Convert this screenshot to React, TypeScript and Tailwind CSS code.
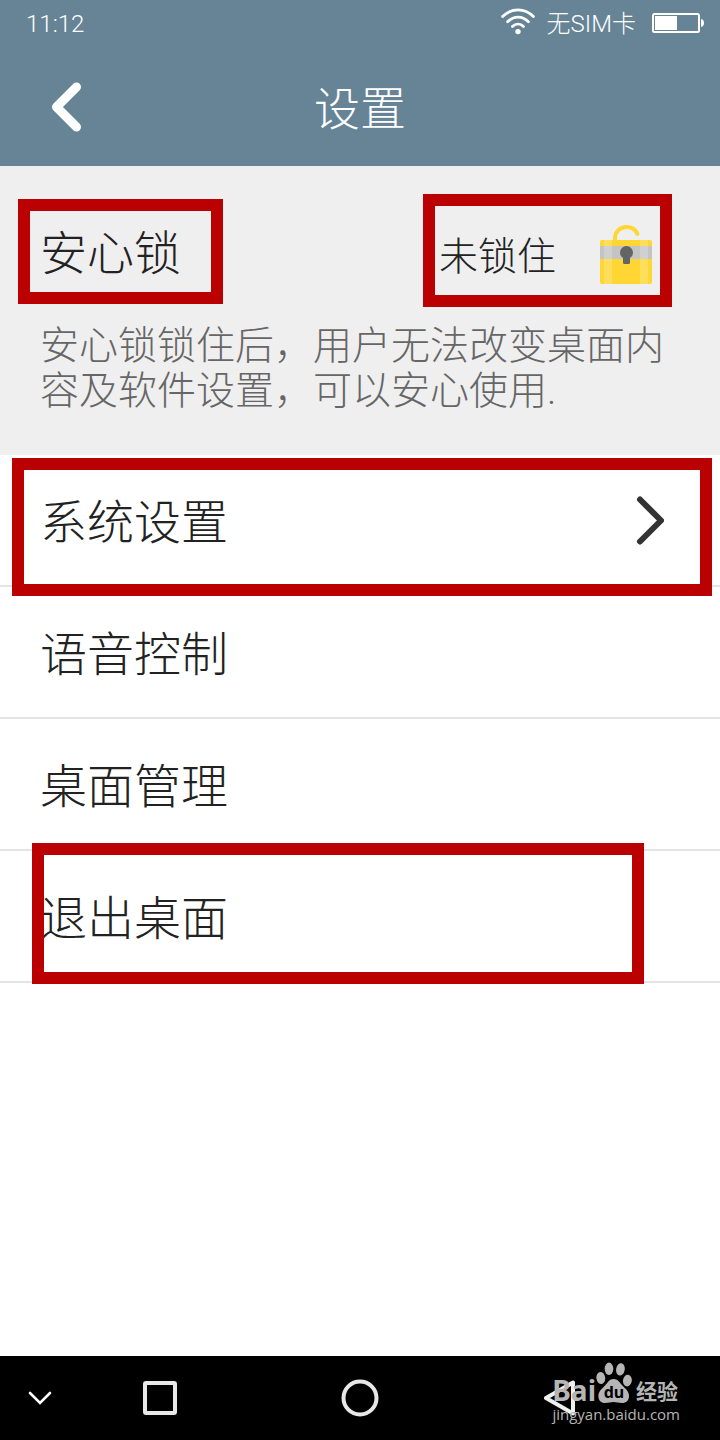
import { ReactNode, useState } from "react";

interface MenuItem {
  id: string;
  label: string;
  arrow?: boolean;
  mark?: string;
}

const menuItems: MenuItem[] = [
  { id: "system", label: "系统设置", arrow: true, mark: "top-[3px] -bottom-[11px] left-3 right-2" },
  { id: "voice", label: "语音控制" },
  { id: "desktop", label: "桌面管理" },
  { id: "exit", label: "退出桌面", mark: "-top-2 -bottom-[3px] left-8 right-19" },
];

// red frame drawn over the part it points out
function Mark({ className }: { className: string }) {
  return (
    <span
      aria-hidden="true"
      className={`pointer-events-none absolute z-10 border-12 border-[#ba0000] ${className}`}
    />
  );
}

function WifiIcon() {
  return (
    <svg width="34" height="32" viewBox="0 0 34 32" fill="none" stroke="white" strokeWidth="2.8" strokeLinecap="round">
      <path d="M1.6 8.6C10.4 -0.4 23.6 -0.4 32.4 8.6" />
      <path d="M6.6 13.8C12.8 7.6 21.2 7.6 27.4 13.8" />
      <path d="M11.4 18.6C14.8 15.2 19.2 15.2 22.6 18.6" />
      <circle cx="17" cy="23.6" r="2.7" fill="white" stroke="none" />
    </svg>
  );
}

function BatteryIcon() {
  return (
    <svg width="52" height="22" viewBox="0 0 52 22" fill="none">
      <rect x="1" y="1" width="46" height="18" rx="1.5" stroke="white" strokeWidth="2" />
      <rect x="3" y="3" width="22" height="14" fill="white" />
      <path d="M49 6C51 6.4 52 7.6 52 10C52 12.4 51 13.6 49 14Z" fill="white" />
    </svg>
  );
}

function LockIcon() {
  return (
    <svg width="52" height="60" viewBox="0 0 52 60" fill="none">
      <path d="M15 17V13.5C15 6.5 20 2 26.5 2C31.5 2 35.5 4.5 37.4 9" stroke="#ffd633" strokeWidth="4" strokeLinecap="round" />
      <rect y="15" width="52" height="44" rx="2" fill="#ffd633" />
      <rect x="4" y="15" width="8" height="44" fill="#ffde5c" />
      <rect x="40" y="15" width="8" height="44" fill="#ffde5c" />
      <rect y="21" width="52" height="13" fill="#c4c4c4" />
      <rect x="4" y="21" width="8" height="13" fill="#d0d0d0" />
      <rect x="40" y="21" width="8" height="13" fill="#d0d0d0" />
      <circle cx="26.5" cy="27.5" r="6.5" fill="#646464" />
      <path d="M23 31H30V37.5Q30 39 28.5 39H24.5Q23 39 23 37.5Z" fill="#646464" />
    </svg>
  );
}

function PawIcon() {
  return (
    <svg width="36" height="42" viewBox="0 0 36 42" fill="#b5b5b5">
      <ellipse cx="4.8" cy="16" rx="4.4" ry="6" transform="rotate(-8 4.8 16)" />
      <ellipse cx="13" cy="6.8" rx="4.3" ry="6.2" />
      <ellipse cx="24.4" cy="7.4" rx="4.3" ry="6.2" transform="rotate(10 24.4 7.4)" />
      <ellipse cx="31.4" cy="18.6" rx="4.4" ry="5.8" transform="rotate(8 31.4 18.6)" />
      <path d="M17.6 17C22 17 23.6 20.6 26.6 23.8C30 27.4 33 29.4 33 34C33 38.4 30.2 41 26 41C22.6 41 20.6 40 17.6 40C14.6 40 12.6 41 9.2 41C5 41 2.4 38.4 2.4 34C2.4 29.4 5.4 27.4 8.8 23.8C11.8 20.6 13.2 17 17.6 17Z" />
    </svg>
  );
}

function NavButton({ label, children }: { label: string; children: ReactNode }) {
  return (
    <button type="button" aria-label={label} className="flex items-center justify-center">
      {children}
    </button>
  );
}

export default function App() {
  const [locked, setLocked] = useState<boolean>(false);

  return (
    <div className="flex min-h-screen flex-col bg-white font-['Roboto','Noto_Sans_CJK_SC',sans-serif] font-light text-[#222222]">
      <header className="bg-[#668496] text-white">
        <div className="flex h-12 items-center justify-between pr-4 pl-[26px] text-2xl">
          <span>11:12</span>
          <div className="flex items-center">
            <WifiIcon />
            <span className="mr-4 ml-3">无SIM卡</span>
            <BatteryIcon />
          </div>
        </div>
        <div className="grid h-[118px] grid-cols-[1fr_auto_1fr] items-center">
          <button type="button" aria-label="返回" className="ml-[52px] w-8">
            <svg width="30" height="50" viewBox="0 0 30 50" fill="none" stroke="white" strokeWidth="9" strokeLinecap="round" strokeLinejoin="round">
              <path d="M24.5 5L4.5 25L24.5 45" />
            </svg>
          </button>
          <h1 className="pt-1 text-[46px] leading-none">设置</h1>
        </div>
      </header>

      <main className="flex-1">
        <section className="bg-[#efefef] px-10 pt-7 pb-[41px]">
          <div className="flex h-30 items-center justify-between">
            <h2 className="relative text-[47px] leading-[60px]">
              安心锁
              <Mark className="-top-[25px] -right-[42px] -left-[22px] -bottom-5" />
            </h2>
            <button
              type="button"
              aria-pressed={locked}
              onClick={() => setLocked(!locked)}
              className="relative mr-7 flex items-center gap-11 pt-0.5 text-[39px] leading-[60px]"
            >
              <span className="pt-1">{locked ? "已锁住" : "未锁住"}</span>
              <LockIcon />
              <Mark className="-top-[27px] -right-5 -left-4 -bottom-5" />
            </button>
          </div>
          <p className="mt-2.5 text-[39px] leading-[45px] text-[#666666]">
            安心锁锁住后，用户无法改变桌面内容及软件设置，可以安心使用.
          </p>
        </section>

        <ul>
          {menuItems.map((item) => (
            <li key={item.id} className="relative border-b-2 border-[#e4e4e4]">
              <button
                type="button"
                className="flex h-[130px] w-full items-center justify-between pr-14 pl-10 text-[47px] leading-none"
              >
                <span className="pt-1">{item.label}</span>
                {item.arrow && (
                  <svg width="28" height="50" viewBox="0 0 28 50" fill="none" stroke="#333333" strokeWidth="6" strokeLinecap="round" strokeLinejoin="round">
                    <path d="M4 4.5L25 25.5L4 46.5" />
                  </svg>
                )}
              </button>
              {item.mark && <Mark className={item.mark} />}
            </li>
          ))}
        </ul>
      </main>

      <nav className="relative grid h-21 grid-cols-[1fr_2fr_3fr_2fr_1fr] bg-black">
        <NavButton label="收起">
          <svg width="24" height="14" viewBox="0 0 24 14" fill="none" stroke="white" strokeWidth="2.6" strokeLinecap="round">
            <path d="M2 2L12 12L22 2" />
          </svg>
        </NavButton>
        <NavButton label="最近任务">
          <svg width="34" height="34" viewBox="0 0 34 34" fill="none" stroke="#e8e8e8" strokeWidth="4">
            <rect x="2" y="2" width="30" height="30" rx="1" />
          </svg>
        </NavButton>
        <NavButton label="主页">
          <svg width="38" height="38" viewBox="0 0 38 38" fill="none" stroke="#e8e8e8" strokeWidth="4">
            <circle cx="19" cy="19" r="16.5" />
          </svg>
        </NavButton>
        <NavButton label="后退">
          <svg width="32" height="38" viewBox="0 0 32 38" fill="none" stroke="#f0f0f0" strokeWidth="4" strokeLinejoin="round">
            <path d="M2 19L29 3.5V34.5Z" />
          </svg>
        </NavButton>
        <div className="pointer-events-none absolute top-1.5 right-10 flex flex-col items-end text-[#b5b5b5]">
          <div className="flex items-end">
            <span className="font-['Noto_Sans'] text-[28px] leading-7 font-bold">Bai</span>
            <div className="relative">
              <PawIcon />
              <span className="absolute inset-x-0 bottom-0.5 text-center font-['Noto_Sans'] text-base leading-5 font-bold text-black">
                du
              </span>
            </div>
            <span className="mr-0.5 ml-1 text-[21px] leading-6 font-bold">经验</span>
          </div>
          <span className="font-['Open_Sans'] text-[15px] leading-5 font-normal">jingyan.baidu.com</span>
        </div>
      </nav>
    </div>
  );
}
